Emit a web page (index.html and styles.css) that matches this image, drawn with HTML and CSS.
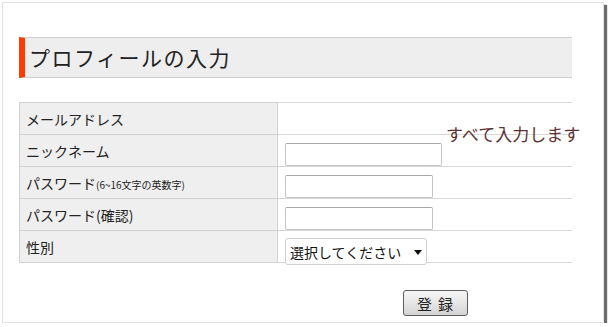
FILE: index.html
```html
<!DOCTYPE html>
<html>
<head>
    <meta charset="utf-8">
    <title>プロフィールの入力</title>
    <link rel="stylesheet" href="styles.css">
</head>
<body>
    <div class="card">
        <h1 class="page-title">プロフィールの入力</h1>

        <div class="form-wrap">
            <table class="profile-form">
                <tr>
                    <th>メールアドレス</th>
                    <td></td>
                </tr>
                <tr>
                    <th>ニックネーム</th>
                    <td><input type="text" class="field field-wide"></td>
                </tr>
                <tr>
                    <th>パスワード<span class="note">(6~16文字の英数字)</span></th>
                    <td><input type="password" class="field"></td>
                </tr>
                <tr>
                    <th>パスワード(確認)</th>
                    <td><input type="password" class="field"></td>
                </tr>
                <tr>
                    <th>性別</th>
                    <td>
                        <span class="select-box">
                            <select class="gender">
                                <option>選択してください</option>
                                <option>男性</option>
                                <option>女性</option>
                            </select>
                            <svg class="select-arrow" width="8" height="5" viewBox="0 0 8 5"><polygon points="0,0 8,0 4,5" fill="#111"/></svg>
                        </span>
                    </td>
                </tr>
            </table>
            <p class="hint">すべて入力します</p>
        </div>

        <div class="actions">
            <button type="button" class="submit">登録</button>
        </div>
    </div>
</body>
</html>
```

FILE: styles.css
```css
html, body {
    margin: 0;
    background: #fff;
}
body {
    padding: 2px 0 0 2px;
    font-family: "Noto Sans CJK JP", "Liberation Sans", sans-serif;
    color: #222;
}
.card {
    box-sizing: border-box;
    width: 602px;
    height: 321px;
    background: #fff;
    border: 1px solid #e2e2e2;
    box-shadow: 3px 3px 1px #6c6c6c;
    padding: 34px 0 0 16px;
}
.page-title {
    box-sizing: border-box;
    width: 553px;
    height: 41px;
    margin: 0;
    padding-left: 4px;
    background: #eeeeef;
    border-top: 1px solid #cfcfcf;
    border-bottom: 1px solid #cfcfcf;
    border-left: 6px solid #ff3a00;
    font-size: 21px;
    font-weight: normal;
    line-height: 38px;
    letter-spacing: 1.5px;
}
.form-wrap {
    position: relative;
    margin-top: 24px;
    width: 553px;
}
.profile-form {
    width: 553px;
    border-collapse: collapse;
    font-size: 14px;
}
.profile-form tr {
    height: 32px;
}
.profile-form th {
    box-sizing: border-box;
    width: 258px;
    height: 32px;
    padding: 0 6px;
    background: #efefef;
    border: 1px solid #d2d2d2;
    font-weight: normal;
    text-align: left;
    vertical-align: middle;
}
.profile-form td {
    box-sizing: border-box;
    height: 32px;
    padding: 0 0 0 7px;
    border-top: 1px solid #d8d8d8;
    border-bottom: 1px solid #d8d8d8;
    vertical-align: bottom;
}
.note {
    font-size: 10px;
}
.field {
    display: block;
    box-sizing: border-box;
    width: 148px;
    height: 23px;
    margin: 0;
    border: 1px solid #c4c4c4;
    border-top-color: #a8a8a8;
    border-radius: 2px;
    background: #fff;
}
.field-wide {
    width: 157px;
}
.select-box {
    position: relative;
    display: block;
    width: 142px;
    height: 24px;
}
.gender {
    -webkit-appearance: none;
    appearance: none;
    box-sizing: border-box;
    width: 142px;
    height: 27px;
    margin: 0;
    padding: 0 0 0 4px;
    border: 1px solid #d0d0d0;
    border-radius: 3px;
    background: #fff;
    font-family: inherit;
    font-size: 14px;
    color: #111;
}
.select-arrow {
    position: absolute;
    left: 129px;
    top: 12px;
}
.hint {
    position: absolute;
    left: 427px;
    top: 21px;
    margin: 0;
    font-size: 17px;
    line-height: 22px;
    color: #5e3234;
    white-space: nowrap;
}
.actions {
    margin-top: 27px;
    padding-left: 384px;
}
.submit {
    box-sizing: border-box;
    width: 65px;
    height: 26px;
    padding: 0 0 0 5px;
    border: 1px solid #5e5e5e;
    border-radius: 3px;
    background: linear-gradient(#f6f6f6, #e6e6e6 50%, #d4d4d4);
    font-family: inherit;
    font-size: 15px;
    letter-spacing: 6px;
    color: #222;
}
```
